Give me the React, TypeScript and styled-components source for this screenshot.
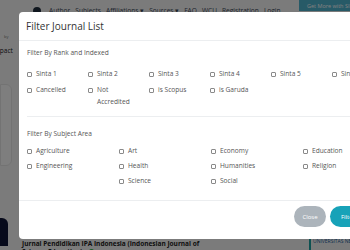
import styled, { createGlobalStyle } from "styled-components";

const GlobalStyle = createGlobalStyle`
  html, body {
    margin: 0;
    padding: 0;
    width: 350px;
    height: 250px;
    overflow: hidden;
    font-family: "Open Sans", "Liberation Sans", sans-serif;
    background: #f7f7f7;
  }
`;

const rankItems = [
  "Sinta 1",
  "Sinta 2",
  "Sinta 3",
  "Sinta 4",
  "Sinta 5",
  "Sinta 6",
  "Cancelled",
  "Not Accredited",
  "is Scopus",
  "is Garuda",
];

const subjectItems = [
  "Agriculture",
  "Art",
  "Economy",
  "Education",
  "Engineering",
  "Health",
  "Humanities",
  "Religion",
  "",
  "Science",
  "Social",
];

const Page = styled.div`
  position: relative;
  width: 350px;
  height: 250px;
  overflow: hidden;
  background: #f7f7f7;
  color: #333;
`;

const NavBar = styled.div`
  display: flex;
  align-items: flex-start;
  height: 14px;
  padding-left: 33px;
`;

const NavLinks = styled.div`
  display: flex;
  align-items: center;
  gap: 5px;
  padding-top: 6px;
  font-size: 6.6px;
  color: #3d4a5a;
  white-space: nowrap;
`;

const NavIcon = styled.span`
  width: 8px;
  height: 8px;
  border-radius: 50%;
  background: #1f2d3d;
  margin-right: 3px;
`;

const CtaButton = styled.div`
  margin-left: auto;
  width: 51px;
  height: 11px;
  background: #4fb4cf;
  color: #fff;
  font-size: 5.5px;
  white-space: nowrap;
  overflow: hidden;
  padding: 2px 0 0 8px;
  box-sizing: border-box;
`;

const SideCol = styled.div`
  display: flex;
  flex-direction: column;
  width: 60px;
  padding-top: 20px;
`;

const ImpactBox = styled.div`
  font-size: 6.5px;
  color: #222;
  line-height: 10px;
  margin-left: -8px;
  & > span {
    display: block;
    font-size: 4px;
    line-height: 6px;
    color: #777;
    padding-left: 12px;
    margin-bottom: 6px;
  }
`;

const SideCard = styled.div`
  width: 10px;
  height: 80px;
  margin-top: 28px;
  border-radius: 0 6px 6px 0;
  background: #fdfdfd;
  border: 1px solid #e6e6e6;
`;

const DarkTab = styled.div`
  width: 8px;
  height: 28px;
  border-radius: 0 6px 0 0;
  background: #0e1537;
  margin-top: 52px;
`;

const BottomText = styled.div`
  position: absolute;
  left: 22px;
  top: 240px;
  font-size: 6.5px;
  font-weight: 700;
  color: #222;
  line-height: 8px;
  white-space: nowrap;
`;

const GreenDot = styled.span`
  display: inline-block;
  width: 5px;
  height: 5px;
  border-radius: 50%;
  background: #2db34a;
  margin-left: 5px;
`;

const SideLink = styled.div`
  position: absolute;
  left: 309px;
  top: 238px;
  border-left: 2px solid #1aa3a3;
  padding-left: 2px;
  font-size: 5px;
  color: #1a5fa0;
  height: 12px;
  white-space: nowrap;
`;

const Backdrop = styled.div`
  position: absolute;
  inset: 0;
  background: rgba(0, 0, 0, 0.5);
`;

const Modal = styled.div`
  position: absolute;
  left: 19px;
  top: 12px;
  width: 400px;
  height: 227px;
  background: #fff;
  border-radius: 4px;
  display: flex;
  flex-direction: column;
  color: #444;
`;

const Header = styled.div`
  height: 29px;
  box-sizing: border-box;
  display: flex;
  align-items: center;
  padding-left: 7px;
  border-bottom: 1px solid #eceef0;
`;

const Title = styled.h5`
  margin: 0;
  font-size: 10px;
  font-weight: 500;
  color: #333;
`;

const Body = styled.div`
  flex: 1;
  padding: 7px 8px 0 8px;
`;

const Section = styled.div<{ divider?: boolean }>`
  padding-bottom: 8px;
  border-bottom: ${({ divider }) => (divider ? "1px solid #eceef0" : "none")};
  margin-bottom: ${({ divider }) => (divider ? "12px" : "0")};
`;

const SectionTitle = styled.div<{ gap: number }>`
  font-size: 6.6px;
  color: #555;
  line-height: 9px;
  margin-bottom: ${({ gap }) => gap}px;
`;

const Grid = styled.div<{ cols: number; colWidth: number; rowGap: number }>`
  display: grid;
  grid-template-columns: repeat(${({ cols }) => cols}, ${({ colWidth }) => colWidth}px);
  row-gap: ${({ rowGap }) => rowGap}px;
`;

const Item = styled.label`
  display: flex;
  align-items: flex-start;
  gap: 4px;
  font-size: 6.6px;
  line-height: 12px;
  color: #555;
  padding-right: 16px;
`;

const Box = styled.span`
  flex: 0 0 auto;
  width: 5px;
  height: 5px;
  margin-top: 3.5px;
  border: 0.8px solid #8a8a8a;
  border-radius: 1px;
  box-sizing: border-box;
`;

const Footer = styled.div`
  height: 39px;
  box-sizing: border-box;
  border-top: 1px solid #eceef0;
  display: flex;
  align-items: flex-start;
  padding: 5px 0 0 275px;
  gap: 4px;
`;

const Button = styled.button<{ variant: "close" | "filter" }>`
  height: 21px;
  border: none;
  border-radius: 11px;
  font-family: inherit;
  font-size: 6px;
  color: #fff;
  padding: 0 8px;
  width: ${({ variant }) => (variant === "close" ? "32px" : "36px")};
  background: ${({ variant }) => (variant === "close" ? "#acb4bb" : "#17a2b8")};
`;

export default function App() {
  return (
    <>
      <GlobalStyle />
      <Page>
        <NavBar>
          <NavLinks>
            <NavIcon />
            <span>Author</span>
            <span>Subjects</span>
            <span>Affiliations ▾</span>
            <span>Sources ▾</span>
            <span>FAQ</span>
            <span>WCU</span>
            <span>Registration</span>
            <span>Login</span>
          </NavLinks>
          <CtaButton>Get More with SINTA</CtaButton>
        </NavBar>
        <SideCol>
          <ImpactBox>
            <span>by</span>
            Impact
          </ImpactBox>
          <SideCard />
          <DarkTab />
        </SideCol>
        <BottomText>
          Jurnal Pendidikan IPA Indonesia (Indonesian Journal of
          <br />
          Science Education) <GreenDot />
        </BottomText>
        <SideLink>UNIVERSITAS NEGERI</SideLink>
        <Backdrop />
        <Modal>
          <Header>
            <Title>Filter Journal List</Title>
          </Header>
          <Body>
            <Section divider>
              <SectionTitle gap={11}>Filter By Rank and Indexed</SectionTitle>
              <Grid cols={6} colWidth={61} rowGap={4}>
                {rankItems.map((label) => (
                  <Item key={label}>
                    <Box />
                    <span>{label}</span>
                  </Item>
                ))}
              </Grid>
            </Section>
            <Section>
              <SectionTitle gap={7}>Filter By Subject Area</SectionTitle>
              <Grid cols={4} colWidth={92} rowGap={3}>
                {subjectItems.map((label, i) =>
                  label ? (
                    <Item key={label}>
                      <Box />
                      <span>{label}</span>
                    </Item>
                  ) : (
                    <span key={"empty" + i} />
                  )
                )}
              </Grid>
            </Section>
          </Body>
          <Footer>
            <Button variant="close">Close</Button>
            <Button variant="filter">Filter</Button>
          </Footer>
        </Modal>
      </Page>
    </>
  );
}
